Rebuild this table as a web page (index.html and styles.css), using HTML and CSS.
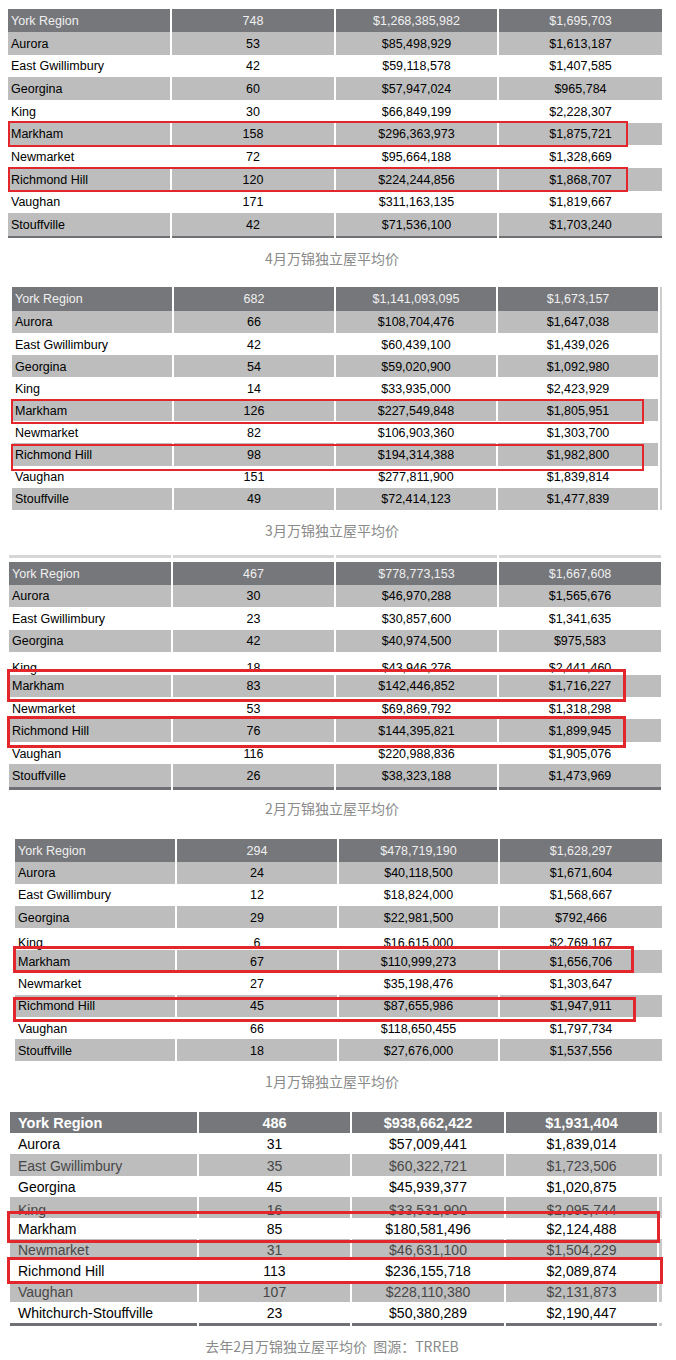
FILE: index.html
```html
<!DOCTYPE html>
<html lang="zh-CN">
<head>
<meta charset="utf-8">
<title>万锦独立屋平均价</title>
<link rel="stylesheet" href="styles.css">
</head>
<body>
<main class="page">

  <section class="chart chart-1">
    <div class="sheet">
      <div class="row head"><span class="cell name">York Region</span><span class="cell">748</span><span class="cell">$1,268,385,982</span><span class="cell">$1,695,703</span></div>
      <div class="row shade"><span class="cell name">Aurora</span><span class="cell">53</span><span class="cell">$85,498,929</span><span class="cell">$1,613,187</span></div>
      <div class="row"><span class="cell name">East Gwillimbury</span><span class="cell">42</span><span class="cell">$59,118,578</span><span class="cell">$1,407,585</span></div>
      <div class="row shade"><span class="cell name">Georgina</span><span class="cell">60</span><span class="cell">$57,947,024</span><span class="cell">$965,784</span></div>
      <div class="row"><span class="cell name">King</span><span class="cell">30</span><span class="cell">$66,849,199</span><span class="cell">$2,228,307</span></div>
      <div class="row shade"><span class="cell name">Markham</span><span class="cell">158</span><span class="cell">$296,363,973</span><span class="cell">$1,875,721</span></div>
      <div class="row"><span class="cell name">Newmarket</span><span class="cell">72</span><span class="cell">$95,664,188</span><span class="cell">$1,328,669</span></div>
      <div class="row shade"><span class="cell name">Richmond Hill</span><span class="cell">120</span><span class="cell">$224,244,856</span><span class="cell">$1,868,707</span></div>
      <div class="row"><span class="cell name">Vaughan</span><span class="cell">171</span><span class="cell">$311,163,135</span><span class="cell">$1,819,667</span></div>
      <div class="row shade last"><span class="cell name">Stouffville</span><span class="cell">42</span><span class="cell">$71,536,100</span><span class="cell">$1,703,240</span></div>
      <div class="mark mark-1a"></div>
      <div class="mark mark-1b"></div>
    </div>
    <p class="caption">4月万锦独立屋平均价</p>
  </section>

  <section class="chart chart-2">
    <div class="sheet">
      <div class="row head"><span class="cell name">York Region</span><span class="cell">682</span><span class="cell">$1,141,093,095</span><span class="cell">$1,673,157</span><span class="cell edge"></span></div>
      <div class="row shade"><span class="cell name">Aurora</span><span class="cell">66</span><span class="cell">$108,704,476</span><span class="cell">$1,647,038</span><span class="cell edge"></span></div>
      <div class="row"><span class="cell name">East Gwillimbury</span><span class="cell">42</span><span class="cell">$60,439,100</span><span class="cell">$1,439,026</span><span class="cell edge"></span></div>
      <div class="row shade"><span class="cell name">Georgina</span><span class="cell">54</span><span class="cell">$59,020,900</span><span class="cell">$1,092,980</span><span class="cell edge"></span></div>
      <div class="row"><span class="cell name">King</span><span class="cell">14</span><span class="cell">$33,935,000</span><span class="cell">$2,423,929</span><span class="cell edge"></span></div>
      <div class="row shade"><span class="cell name">Markham</span><span class="cell">126</span><span class="cell">$227,549,848</span><span class="cell">$1,805,951</span><span class="cell edge"></span></div>
      <div class="row"><span class="cell name">Newmarket</span><span class="cell">82</span><span class="cell">$106,903,360</span><span class="cell">$1,303,700</span><span class="cell edge"></span></div>
      <div class="row shade"><span class="cell name">Richmond Hill</span><span class="cell">98</span><span class="cell">$194,314,388</span><span class="cell">$1,982,800</span><span class="cell edge"></span></div>
      <div class="row"><span class="cell name">Vaughan</span><span class="cell">151</span><span class="cell">$277,811,900</span><span class="cell">$1,839,814</span><span class="cell edge"></span></div>
      <div class="row shade"><span class="cell name">Stouffville</span><span class="cell">49</span><span class="cell">$72,414,123</span><span class="cell">$1,477,839</span><span class="cell edge"></span></div>
      <div class="mark mark-2a"></div>
      <div class="mark mark-2b"></div>
    </div>
    <p class="caption">3月万锦独立屋平均价</p>
  </section>

  <section class="chart chart-3">
    <div class="sheet">
      <div class="row stub"><span class="cell"></span><span class="cell"></span><span class="cell"></span><span class="cell"></span></div>
      <div class="row head"><span class="cell name">York Region</span><span class="cell">467</span><span class="cell">$778,773,153</span><span class="cell">$1,667,608</span></div>
      <div class="row shade"><span class="cell name">Aurora</span><span class="cell">30</span><span class="cell">$46,970,288</span><span class="cell">$1,565,676</span></div>
      <div class="row"><span class="cell name">East Gwillimbury</span><span class="cell">23</span><span class="cell">$30,857,600</span><span class="cell">$1,341,635</span></div>
      <div class="row shade"><span class="cell name">Georgina</span><span class="cell">42</span><span class="cell">$40,974,500</span><span class="cell">$975,583</span></div>
      <div class="row clipped"><span class="cell name">King</span><span class="cell">18</span><span class="cell">$43,946,276</span><span class="cell">$2,441,460</span></div>
      <div class="row shade"><span class="cell name">Markham</span><span class="cell">83</span><span class="cell">$142,446,852</span><span class="cell">$1,716,227</span></div>
      <div class="row"><span class="cell name">Newmarket</span><span class="cell">53</span><span class="cell">$69,869,792</span><span class="cell">$1,318,298</span></div>
      <div class="row shade"><span class="cell name">Richmond Hill</span><span class="cell">76</span><span class="cell">$144,395,821</span><span class="cell">$1,899,945</span></div>
      <div class="row"><span class="cell name">Vaughan</span><span class="cell">116</span><span class="cell">$220,988,836</span><span class="cell">$1,905,076</span></div>
      <div class="row shade last"><span class="cell name">Stouffville</span><span class="cell">26</span><span class="cell">$38,323,188</span><span class="cell">$1,473,969</span></div>
      <div class="mark mark-3a"></div>
      <div class="mark mark-3b"></div>
    </div>
    <p class="caption">2月万锦独立屋平均价</p>
  </section>

  <section class="chart chart-4">
    <div class="sheet">
      <div class="row head"><span class="cell name">York Region</span><span class="cell">294</span><span class="cell">$478,719,190</span><span class="cell">$1,628,297</span></div>
      <div class="row shade"><span class="cell name">Aurora</span><span class="cell">24</span><span class="cell">$40,118,500</span><span class="cell">$1,671,604</span></div>
      <div class="row"><span class="cell name">East Gwillimbury</span><span class="cell">12</span><span class="cell">$18,824,000</span><span class="cell">$1,568,667</span></div>
      <div class="row shade"><span class="cell name">Georgina</span><span class="cell">29</span><span class="cell">$22,981,500</span><span class="cell">$792,466</span></div>
      <div class="row clipped"><span class="cell name">King</span><span class="cell">6</span><span class="cell">$16,615,000</span><span class="cell">$2,769,167</span></div>
      <div class="row shade"><span class="cell name">Markham</span><span class="cell">67</span><span class="cell">$110,999,273</span><span class="cell">$1,656,706</span></div>
      <div class="row"><span class="cell name">Newmarket</span><span class="cell">27</span><span class="cell">$35,198,476</span><span class="cell">$1,303,647</span></div>
      <div class="row shade"><span class="cell name">Richmond Hill</span><span class="cell">45</span><span class="cell">$87,655,986</span><span class="cell">$1,947,911</span></div>
      <div class="row"><span class="cell name">Vaughan</span><span class="cell">66</span><span class="cell">$118,650,455</span><span class="cell">$1,797,734</span></div>
      <div class="row shade"><span class="cell name">Stouffville</span><span class="cell">18</span><span class="cell">$27,676,000</span><span class="cell">$1,537,556</span></div>
      <div class="mark mark-4a"></div>
      <div class="mark mark-4b"></div>
    </div>
    <p class="caption">1月万锦独立屋平均价</p>
  </section>

  <section class="chart chart-5">
    <div class="sheet">
      <div class="row head"><span class="cell name">York Region</span><span class="cell">486</span><span class="cell">$938,662,422</span><span class="cell">$1,931,404</span><span class="cell edge"></span></div>
      <div class="row"><span class="cell name">Aurora</span><span class="cell">31</span><span class="cell">$57,009,441</span><span class="cell">$1,839,014</span><span class="cell edge"></span></div>
      <div class="row shade"><span class="cell name">East Gwillimbury</span><span class="cell">35</span><span class="cell">$60,322,721</span><span class="cell">$1,723,506</span><span class="cell edge"></span></div>
      <div class="row"><span class="cell name">Georgina</span><span class="cell">45</span><span class="cell">$45,939,377</span><span class="cell">$1,020,875</span><span class="cell edge"></span></div>
      <div class="row shade clipped"><span class="cell name">King</span><span class="cell">16</span><span class="cell">$33,531,900</span><span class="cell">$2,095,744</span><span class="cell edge"></span></div>
      <div class="row"><span class="cell name">Markham</span><span class="cell">85</span><span class="cell">$180,581,496</span><span class="cell">$2,124,488</span><span class="cell edge"></span></div>
      <div class="row shade"><span class="cell name">Newmarket</span><span class="cell">31</span><span class="cell">$46,631,100</span><span class="cell">$1,504,229</span><span class="cell edge"></span></div>
      <div class="row"><span class="cell name">Richmond Hill</span><span class="cell">113</span><span class="cell">$236,155,718</span><span class="cell">$2,089,874</span><span class="cell edge"></span></div>
      <div class="row shade"><span class="cell name">Vaughan</span><span class="cell">107</span><span class="cell">$228,110,380</span><span class="cell">$2,131,873</span><span class="cell edge"></span></div>
      <div class="row last"><span class="cell name">Whitchurch-Stouffville</span><span class="cell">23</span><span class="cell">$50,380,289</span><span class="cell">$2,190,447</span><span class="cell edge"></span></div>
      <div class="mark mark-5a"></div>
      <div class="mark mark-5b"></div>
    </div>
    <p class="caption">去年2月万锦独立屋平均价&nbsp;&nbsp;图源：TRREB</p>
  </section>

</main>
</body>
</html>
```

FILE: styles.css
```css
* { box-sizing: border-box; }

body {
  margin: 0;
  background: #ffffff;
  font-family: "Liberation Sans", Arial, sans-serif;
}

.page {
  width: 664px;
  padding-top: 9px;
  display: flex;
  flex-direction: column;
}

.chart { display: flex; flex-direction: column; }

.sheet {
  position: relative;
  display: flex;
  flex-direction: column;
  font-size: 12.5px;
  color: #000000;
}

.row {
  display: grid;
  column-gap: 2px;
  grid-template-columns: var(--cols);
  height: var(--rh);
}

.row.head { height: var(--hh); }

.cell {
  display: flex;
  align-items: center;
  justify-content: center;
  padding-top: 1px;
  white-space: nowrap;
  overflow: hidden;
}

.cell.name {
  justify-content: flex-start;
  padding-left: 3px;
}

.row.head .cell {
  background: #76777b;
  color: #f0f0f0;
}

.row.shade .cell { background: #bdbdbd; }

.row.clipped .cell { align-items: flex-end; padding-top: 0; }

.row.last { height: calc(var(--rh) + 2px); }
.row.last .cell { border-bottom: 2px solid #6f7074; }

.row.stub { height: 3px; margin-bottom: 4px; }
.row.stub .cell { background: #d6d6d6; padding: 0; }

.caption {
  margin: 10px 0 0;
  font-family: "Noto Sans CJK SC", "Noto Sans", sans-serif;
  font-size: 14px;
  line-height: 20px;
  color: #8a8a8a;
  text-align: center;
}

.mark {
  position: absolute;
  border: 2px solid #e3262b;
  pointer-events: none;
}

/* ---------- table 1 ---------- */
.chart-1 .sheet {
  margin-left: 8px;
  --cols: 162px 162px 161px 163px;
  --hh: 23px;
  --rh: 22.67px;
}
.mark-1a { left: 0; top: 112px; width: 620px; height: 26px; }
.mark-1b { left: 0; top: 158px; width: 620px; height: 25px; }

/* ---------- table 2 ---------- */
.chart-2 .sheet {
  margin-top: 19px;
  margin-left: 12px;
  --cols: 160px 160px 160px 160px 2px;
  --hh: 24px;
  --rh: 22.1px;
}
.chart-2 .cell.edge { background: #cdcdcd; }
.mark-2a { left: -1px; top: 112px; width: 633px; height: 25px; }
.mark-2b { left: -1px; top: 157px; width: 633px; height: 27px; }

/* ---------- table 3 ---------- */
.chart-3 .sheet {
  margin-top: 15px;
  margin-left: 9px;
  --cols: 162px 161px 161px 162px;
  --hh: 23px;
  --rh: 22.45px;
}
.chart-3 .row.last { height: calc(var(--rh) + 3px); }
.chart-3 .row.last .cell { border-bottom-width: 3px; }
.chart-3 .caption { margin-top: 8px; }
.mark-3a { left: -2px; top: 114px; width: 619px; height: 33px; border-width: 3px; }
.mark-3b { left: -2px; top: 161px; width: 619px; height: 32px; border-width: 3px; }

/* ---------- table 4 ---------- */
.chart-4 .sheet {
  margin-top: 21px;
  margin-left: 15px;
  --cols: 160px 160px 159px 162px;
  --hh: 23px;
  --rh: 22.2px;
}
.mark-4a { left: -2px; top: 107px; width: 621px; height: 27px; border-width: 3px; }
.mark-4b { left: -2px; top: 158px; width: 623px; height: 25px; border-width: 3px; }

/* ---------- table 5 ---------- */
.chart-5 .sheet {
  margin-top: 21px;
  margin-left: 10px;
  font-size: 14px;
  color: #000000;
  --cols: 187px 151px 152px 151px 3px;
  --hh: 21px;
  --rh: 21.1px;
}
.chart-5 .cell.name { padding-left: 8px; }
.chart-5 .row.head .cell {
  font-weight: bold;
  font-size: 14.5px;
  color: #ffffff;
}
.chart-5 .row.shade .cell { color: #474747; }
.chart-5 .row .cell.edge { background: transparent; }
.chart-5 .row.head .cell.edge,
.chart-5 .row.shade .cell.edge { background: #c9c9c9; }
.chart-5 .row.last { height: calc(var(--rh) + 3px); }
.chart-5 .row.last .cell { border-bottom-width: 3px; }
.chart-5 .row.last .cell.edge { border-bottom-color: #c9c9c9; }
.mark-5a { left: -3px; top: 99px; width: 653px; height: 32px; border-width: 3px; }
.mark-5b { left: -3px; top: 145px; width: 656px; height: 27px; border-width: 3px; }
```
